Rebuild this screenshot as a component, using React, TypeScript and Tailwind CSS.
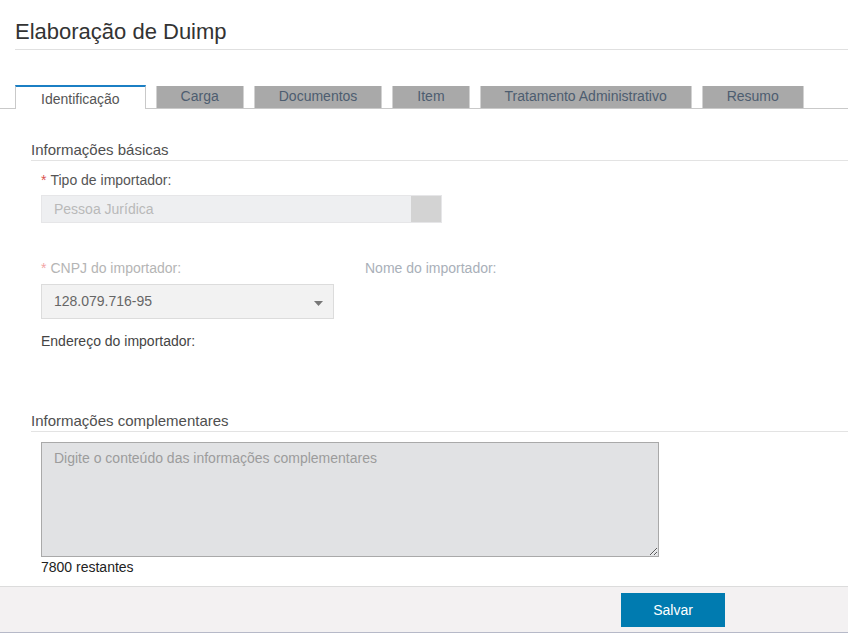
import React from "react";

const tabs = ["Carga", "Documentos", "Item", "Tratamento Administrativo", "Resumo"];

function SectionHeader({ title, className = "" }: { title: string; className?: string }) {
  return (
    <div className={`ml-[31px] border-b border-[#e3e3e3] pb-[1px] ${className}`}>
      <h2 className="text-[15px] leading-[18px] text-[#4f4f4f]">{title}</h2>
    </div>
  );
}

export default function App() {
  return (
    <div className="min-h-screen bg-white font-['Liberation_Sans',Arial,sans-serif] flex flex-col">
      {/* Title */}
      <div className="pl-[15px]">
        <h1 className="text-[22px] leading-[26px] text-[#333] pt-[19px] pb-[4px] border-b border-[#e0e0e0]">
          Elaboração de Duimp
        </h1>
      </div>

      {/* Tabs */}
      <div className="mt-[35px] pl-[15px] flex items-end border-b border-[#c9c9c9] h-[24px]">
        <div className="h-[24px] -mb-px px-[25px] bg-white border-x border-[#c9c9c9] border-t-2 border-t-[#1b7fc4] text-[14px] leading-[22px] pt-[1px] text-[#555] mr-[10px]">
          Identificação
        </div>
        {tabs.map((t) => (
          <div
            key={t}
            className="h-[22px] px-[24px] bg-[#a9a9a9] border-x border-[#d2d2d2] text-[14px] leading-[20px] text-[#4d5d70] mr-[10px]"
          >
            {t}
          </div>
        ))}
      </div>

      {/* Informações básicas */}
      <SectionHeader title="Informações básicas" className="mt-[32px]" />

      <div className="pl-[41px]">
        <div className="mt-[11px] text-[14px] leading-[16px] text-[#555]">
          <span className="text-[#d9534f] mr-[4px]">*</span>Tipo de importador:
        </div>
        <div className="mt-[7px] w-[401px] h-[28px] flex bg-[#eeeff1] border border-[#e6e6e8]">
          <div className="flex-1 px-[12px] text-[14px] leading-[26px] text-[#b9b9b9]">Pessoa Jurídica</div>
          <div className="w-[30px] bg-[#d3d3d3]" />
        </div>

        <div className="mt-[37px] flex text-[14px] leading-[16px]">
          <div className="w-[324px] text-[#b5b5b5]">
            <span className="text-[#f2a5a5] mr-[4px]">*</span>CNPJ do importador:
          </div>
          <div className="text-[#a9b0b9]">Nome do importador:</div>
        </div>
        <div className="mt-[8px] w-[293px] h-[35px] flex items-center justify-between bg-[#f2f2f2] border border-[#dcdcdc] pl-[12px] pr-[10px]">
          <span className="text-[14px] text-[#666]">128.079.716-95</span>
          <svg width="9" height="5" viewBox="0 0 9 5" className="mt-[3px]">
            <path d="M0 0 L9 0 L4.5 5 Z" fill="#777" />
          </svg>
        </div>

        <div className="mt-[14px] text-[14px] leading-[16px] text-[#444]">Endereço do importador:</div>
      </div>

      {/* Informações complementares */}
      <SectionHeader title="Informações complementares" className="mt-[63px]" />

      <div className="pl-[41px]">
        <textarea
          readOnly
          placeholder="Digite o conteúdo das informações complementares"
          className="mt-[10px] block w-[618px] h-[115px] bg-[#e1e2e4] border border-[#a9a9a9] px-[12px] py-[6px] text-[14px] leading-[18px] text-[#555] placeholder:text-[#9c9c9c] outline-none"
        />
        <div className="mt-[2px] text-[14px] leading-[16px] text-[#222]">7800 restantes</div>
      </div>

      {/* Footer */}
      <div className="mt-[11px] bg-[#f3f1f2] border-t border-[#dcdcdc] border-b-2 border-b-[#b6b9c8] flex justify-end pr-[123px] pt-[6px] pb-[5px]">
        <button className="w-[104px] h-[34px] bg-[#007bb0] text-white text-[14px]">Salvar</button>
      </div>
    </div>
  );
}
